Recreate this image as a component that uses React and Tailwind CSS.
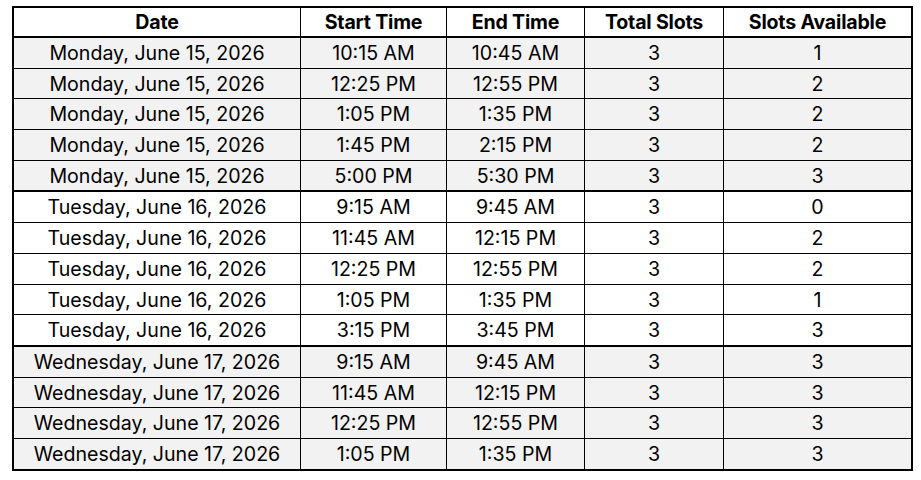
import React from "react";

const rows = [
  ["Monday, June 15, 2026", "10:15 AM", "10:45 AM", "3", "1"],
  ["Monday, June 15, 2026", "12:25 PM", "12:55 PM", "3", "2"],
  ["Monday, June 15, 2026", "1:05 PM", "1:35 PM", "3", "2"],
  ["Monday, June 15, 2026", "1:45 PM", "2:15 PM", "3", "2"],
  ["Monday, June 15, 2026", "5:00 PM", "5:30 PM", "3", "3"],
  ["Tuesday, June 16, 2026", "9:15 AM", "9:45 AM", "3", "0"],
  ["Tuesday, June 16, 2026", "11:45 AM", "12:15 PM", "3", "2"],
  ["Tuesday, June 16, 2026", "12:25 PM", "12:55 PM", "3", "2"],
  ["Tuesday, June 16, 2026", "1:05 PM", "1:35 PM", "3", "1"],
  ["Tuesday, June 16, 2026", "3:15 PM", "3:45 PM", "3", "3"],
  ["Wednesday, June 17, 2026", "9:15 AM", "9:45 AM", "3", "3"],
  ["Wednesday, June 17, 2026", "11:45 AM", "12:15 PM", "3", "3"],
  ["Wednesday, June 17, 2026", "12:25 PM", "12:55 PM", "3", "3"],
  ["Wednesday, June 17, 2026", "1:05 PM", "1:35 PM", "3", "3"],
];

const widths = ["w-[287px]", "w-[146px]", "w-[138px]", "w-[139px]", "w-[187px]"];
const headers = ["Date", "Start Time", "End Time", "Total Slots", "Slots Available"];

function Row({ cells, bg, border, bold, height }) {
  return (
    <div className={`flex ${bg} ${border} border-black`}>
      {cells.map((c, i) => (
        <div
          key={i}
          className={`${widths[i]} ${height} pt-[2px] flex items-center justify-center ${i < 4 ? "border-r border-black" : ""} ${bold ? "font-bold tracking-[-0.01em]" : ""}`}
        >
          {c}
        </div>
      ))}
    </div>
  );
}

export default function App() {
  return (
    <div className="w-[921px] h-[480px] bg-white pt-[6px] pl-[12px] text-black text-[19.6px] leading-none" style={{ fontFamily: "Inter, 'Noto Sans', sans-serif" }}>
      <div className="w-[901px] border-2 border-black">
        <Row cells={headers} bg="bg-white" border="border-b-2" bold height="h-[28px]" />
        {rows.map((r, i) => {
          const group = i < 5 ? 0 : i < 10 ? 1 : 2;
          const last = i === 4 || i === 9;
          const end = i === 13;
          return (
            <Row
              key={i}
              cells={r}
              bg={group === 1 ? "bg-white" : "bg-[#f2f2f2]"}
              border={end ? "" : last ? "border-b-2" : "border-b"}
              height="h-[29.7px]"
            />
          );
        })}
      </div>
    </div>
  );
}
